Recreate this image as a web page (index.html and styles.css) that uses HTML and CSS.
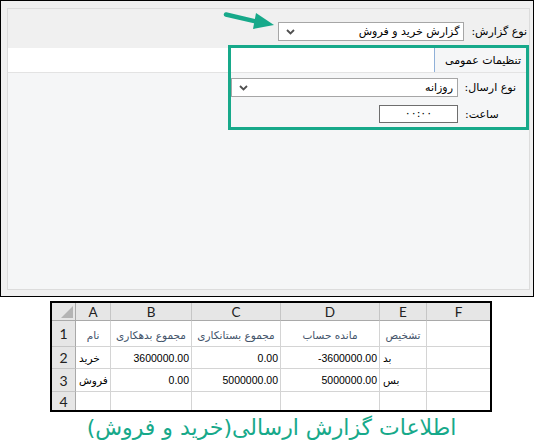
FILE: index.html
```html
<!DOCTYPE html>
<html lang="fa">
<head>
<meta charset="utf-8">
<link rel="stylesheet" href="styles.css">
</head>
<body>
<div class="window">
  <div class="frame">
    <div class="toprow">
      <span class="label lbl-top">نوع گزارش:</span>
      <div class="select sel-report">
        <span class="val">گزارش خرید و فروش</span>
        <svg class="chev" width="9" height="6" viewBox="0 0 9 6"><path d="M1 1 L4.5 4.5 L8 1" fill="none" stroke="#505050" stroke-width="1.8"/></svg>
      </div>
    </div>
    <div class="tabstrip">
      <div class="tab">تنظیمات عمومی</div>
    </div>
    <div class="panel">
      <div class="row row-send">
        <span class="label lbl-col">نوع ارسال:</span>
        <div class="select sel-send">
          <span class="val">روزانه</span>
          <svg class="chev" width="9" height="6" viewBox="0 0 9 6"><path d="M1 1 L4.5 4.5 L8 1" fill="none" stroke="#505050" stroke-width="1.8"/></svg>
        </div>
      </div>
      <div class="row row-time">
        <span class="label lbl-col">ساعت:</span>
        <div class="input">۰۰:۰۰</div>
      </div>
    </div>
  </div>
  <div class="highlight"></div>
  <svg class="arrow" width="60" height="30" viewBox="0 0 60 30">
    <line x1="4" y1="3.5" x2="36" y2="11" stroke="#17a98a" stroke-width="4.5" stroke-linecap="round"/>
    <polygon points="34,2 52,14 31,18" fill="#17a98a"/>
  </svg>
</div>

<div class="sheet">
  <div class="c hdr corner"><span class="tri"></span></div>
  <div class="c hdr col">A</div>
  <div class="c hdr col">B</div>
  <div class="c hdr col">C</div>
  <div class="c hdr col">D</div>
  <div class="c hdr col">E</div>
  <div class="c hdr col last">F</div>

  <div class="c hdr rown">1</div>
  <div class="c t1 fa">نام</div>
  <div class="c t1 fa">مجموع بدهکاری</div>
  <div class="c t1 fa">مجموع بستانکاری</div>
  <div class="c t1 fa">مانده حساب</div>
  <div class="c t1 fa">تشخیص</div>
  <div class="c last"></div>

  <div class="c hdr rown">2</div>
  <div class="c txt fa">خرید</div>
  <div class="c num">3600000.00</div>
  <div class="c num">0.00</div>
  <div class="c num">-3600000.00</div>
  <div class="c txt fa">بد</div>
  <div class="c last"></div>

  <div class="c hdr rown">3</div>
  <div class="c txt fa">فروش</div>
  <div class="c num">0.00</div>
  <div class="c num">5000000.00</div>
  <div class="c num">5000000.00</div>
  <div class="c txt fa">بس</div>
  <div class="c last"></div>

  <div class="c hdr rown lastrow">4</div>
  <div class="c lastrow"></div>
  <div class="c lastrow"></div>
  <div class="c lastrow"></div>
  <div class="c lastrow"></div>
  <div class="c lastrow"></div>
  <div class="c lastrow last"></div>
</div>

<div class="caption">اطلاعات گزارش ارسالی(خرید و فروش)</div>
</body>
</html>
```
FILE: styles.css
```css
* { box-sizing: border-box; }
html, body { margin: 0; padding: 0; background: #ffffff; }
body {
  width: 535px;
  height: 446px;
  overflow: hidden;
  font-family: "DejaVu Sans", sans-serif;
  font-size: 11px;
  color: #000;
}

.window {
  position: relative;
  width: 534px;
  height: 297px;
  border: 1px solid #000;
  background: #f0f0f0;
  padding: 7px 3px 6px 6px;
}

.frame {
  height: 100%;
  border: 1px solid #dcdcdc;
  display: flex;
  flex-direction: column;
}

.toprow {
  direction: rtl;
  display: flex;
  align-items: center;
  height: 39px;
  padding: 13px 2px 7px 0;
  gap: 7px;
}

.label { white-space: nowrap; font-size: 11px; }

.select {
  display: flex;
  align-items: center;
  justify-content: space-between;
  background: #fff;
  border: 1px solid #a6a6a6;
  padding: 0 4px 0 7px;
  height: 19px;
}
.select .val { font-size: 11px; }
.sel-report { width: 186px; }
.sel-send { width: 227px; }
.chev { display: block; }

.tabstrip {
  direction: rtl;
  display: flex;
  height: 25px;
  background: #fff;
  border-bottom: 1px solid #e3e3e3;
}
.tab {
  width: 95px;
  height: 100%;
  background: #f5f6f7;
  border-left: 1px solid #8fb0d8;
  padding-right: 8px;
  display: flex;
  align-items: center;
  font-size: 11px;
}

.panel {
  flex: 1;
  background: #f5f6f7;
  padding: 5px 0 0 0;
  display: flex;
  flex-direction: column;
  gap: 8px;
}

.row {
  direction: rtl;
  display: flex;
  align-items: center;
  gap: 7px;
  padding-right: 13px;
}
.lbl-col { width: 51px; text-align: left; }

.input {
  width: 79px;
  height: 18px;
  background: #fff;
  border: 1px solid #6e6e6e;
  text-align: center;
  line-height: 16px;
  font-size: 11px;
}

.highlight {
  position: absolute;
  left: 227px;
  top: 44px;
  width: 301px;
  height: 85px;
  border: 3px solid #17a98a;
}

.arrow {
  position: absolute;
  left: 221px;
  top: 10px;
}

/* spreadsheet */
.sheet {
  margin: 4px 0 0 50px;
  width: 442px;
  display: grid;
  grid-template-columns: 24px 35px 81px 89px 99px 47px 63px;
  grid-template-rows: 18px 26px 22px 23px 18px;
  border: 2px solid #000;
  background: #fff;
  font-family: "Liberation Sans", sans-serif;
  font-size: 10.5px;
}
.c {
  border-right: 1px solid #d4d4d4;
  border-bottom: 1px solid #d4d4d4;
  display: flex;
  align-items: center;
  padding: 0 3px;
  white-space: nowrap;
  overflow: hidden;
}
.c.last { border-right: none; }
.c.lastrow { border-bottom: none; }
.hdr {
  background: #e6e6e6;
  color: #222;
  font-family: "Lato", "Liberation Sans", sans-serif;
  font-size: 13.5px;
  justify-content: center;
  border-color: #c6c6c6;
}
.hdr.col { border-bottom: 1px solid #a9a9a9; }
.hdr.rown { border-right: 1px solid #a9a9a9; font-size: 14px; }
.corner { position: relative; border-right: 1px solid #a9a9a9; border-bottom: 1px solid #a9a9a9; }
.tri {
  position: absolute;
  right: 2px;
  bottom: 2px;
  width: 0;
  height: 0;
  border-left: 12px solid transparent;
  border-bottom: 12px solid #b4b4b4;
}
.fa { font-family: "DejaVu Sans", sans-serif; font-size: 10.5px; }
.t1 { color: #44546a; justify-content: center; align-items: flex-end; padding-bottom: 5px; }
.txt { justify-content: flex-start; }
.num { justify-content: flex-end; padding-right: 2px; }

.caption {
  height: 34px;
  line-height: 32px;
  text-align: center;
  padding-left: 8px;
  color: #17a98a;
  font-family: "DejaVu Sans", sans-serif;
  font-size: 22px;
  direction: rtl;
}
```
